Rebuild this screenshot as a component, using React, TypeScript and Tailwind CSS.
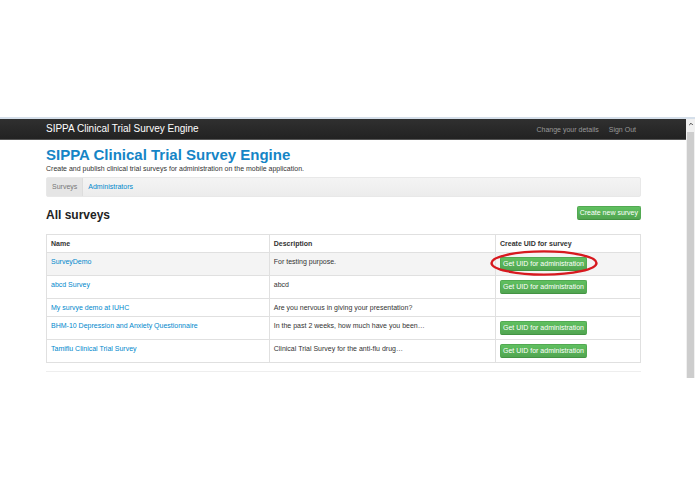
import { ChevronUp } from "lucide-react";

type Survey = {
  name: string;
  description: string;
  canCreateUid: boolean;
  highlighted?: boolean;
};

const surveys: Survey[] = [
  {
    name: "SurveyDemo",
    description: "For testing purpose.",
    canCreateUid: true,
    highlighted: true,
  },
  { name: "abcd Survey", description: "abcd", canCreateUid: true },
  {
    name: "My survye demo at IUHC",
    description: "Are you nervous in giving your presentation?",
    canCreateUid: false,
  },
  {
    name: "BHM-10 Depression and Anxiety Questionnaire",
    description: "In the past 2 weeks, how much have you been…",
    canCreateUid: true,
  },
  {
    name: "Tamiflu Clinical Trial Survey",
    description: "Clinical Trial Survey for the anti-flu drug…",
    canCreateUid: true,
  },
];

function GreenButton({ children }: { children: React.ReactNode }) {
  return (
    <button
      type="button"
      className="block h-[14px] whitespace-nowrap rounded-[2px] border border-[#52a952] border-b-[#439343] bg-linear-to-b from-[#60c060] to-[#51a551] px-[2px] text-[7px] leading-[12px] text-white"
    >
      {children}
    </button>
  );
}

function Navbar() {
  return (
    <nav className="flex h-[21px] items-center justify-between border-b border-[#555] bg-linear-to-b from-[#303030] to-[#222] px-[46px]">
      <a href="#" className="text-[10px] leading-[20px] text-white">
        SIPPA Clinical Trial Survey Engine
      </a>
      <div className="flex gap-[10px] pr-1 text-[7px] text-[#999]">
        <a href="#">Change your details</a>
        <a href="#">Sign Out</a>
      </div>
    </nav>
  );
}

function SurveyTable() {
  return (
    <table className="mt-[10px] w-full table-fixed border-collapse border border-[#e0e0e0] text-left">
      <colgroup>
        <col className="w-3/8" />
        <col />
        <col className="w-[145px]" />
      </colgroup>
      <thead>
        <tr className="h-[18px]">
          <th className="border border-[#e0e0e0] px-1">Name</th>
          <th className="border border-[#e0e0e0] px-1">Description</th>
          <th className="border border-[#e0e0e0] px-1">
            Create UID for survey
          </th>
        </tr>
      </thead>
      <tbody>
        {surveys.map((survey) => (
          <tr
            key={survey.name}
            className={survey.highlighted ? "bg-[#f4f4f4]" : ""}
          >
            <td className="border border-[#e0e0e0] px-1 py-1 align-top">
              <a href="#" className="text-[#0088cc]">
                {survey.name}
              </a>
            </td>
            <td className="border border-[#e0e0e0] px-1 py-1 align-top">
              {survey.description}
            </td>
            <td className="border border-[#e0e0e0] px-1 py-1 align-top">
              {survey.canCreateUid && (
                <div className="relative w-fit">
                  <GreenButton>Get UID for administration</GreenButton>
                  {survey.highlighted && (
                    <svg
                      viewBox="0 0 108 26"
                      fill="none"
                      className="pointer-events-none absolute -left-[10px] -top-[7px] h-[26px] w-[108px]"
                    >
                      <ellipse
                        cx="54"
                        cy="13"
                        rx="52.5"
                        ry="11.6"
                        stroke="#d7191f"
                        strokeWidth="2.4"
                      />
                    </svg>
                  )}
                </div>
              )}
            </td>
          </tr>
        ))}
      </tbody>
    </table>
  );
}

export default function App() {
  return (
    <div className="min-h-screen bg-white pt-[117px] font-['Liberation_Sans',Arial,sans-serif] text-[7px] leading-[9px] text-[#333]">
      <div className="flex border-t-2 border-[#d5dfea]">
        <div className="min-w-0 flex-1">
          <Navbar />
          <main className="pl-[46px] pr-[45px] pb-[6px]">
            <h1 className="pt-[5px] text-[15px] font-bold leading-[19px] text-[#1585c6]">
              <a href="#">SIPPA Clinical Trial Survey Engine</a>
            </h1>
            <p>
              Create and publish clinical trial surveys for administration on
              the mobile application.
            </p>
            <div className="mt-1 flex h-[20px] items-stretch rounded-[2px] border border-[#e8e8e8] bg-linear-to-b from-[#f4f4f4] to-[#ececec] leading-[18px]">
              <a
                href="#"
                className="border-r border-[#ddd] bg-[#e5e5e5] px-[5px] text-[#777]"
              >
                Surveys
              </a>
              <a href="#" className="px-[5px] text-[#0088cc]">
                Administrators
              </a>
            </div>
            <div className="mt-[9px] flex items-start justify-between">
              <h2 className="text-[12px] font-bold leading-[18px] text-[#222]">
                All surveys
              </h2>
              <GreenButton>Create new survey</GreenButton>
            </div>
            <SurveyTable />
            <hr className="mt-2 border-[#eee]" />
          </main>
        </div>
        <div className="flex w-[9px] flex-col bg-[#f0f0f0] pl-px">
          <div className="flex h-[13px] justify-center pt-[2px]">
            <ChevronUp className="size-[6px] text-[#444]" strokeWidth={4} />
          </div>
          <div className="mr-px flex-1 bg-[#cdcdcd]" />
        </div>
      </div>
    </div>
  );
}
